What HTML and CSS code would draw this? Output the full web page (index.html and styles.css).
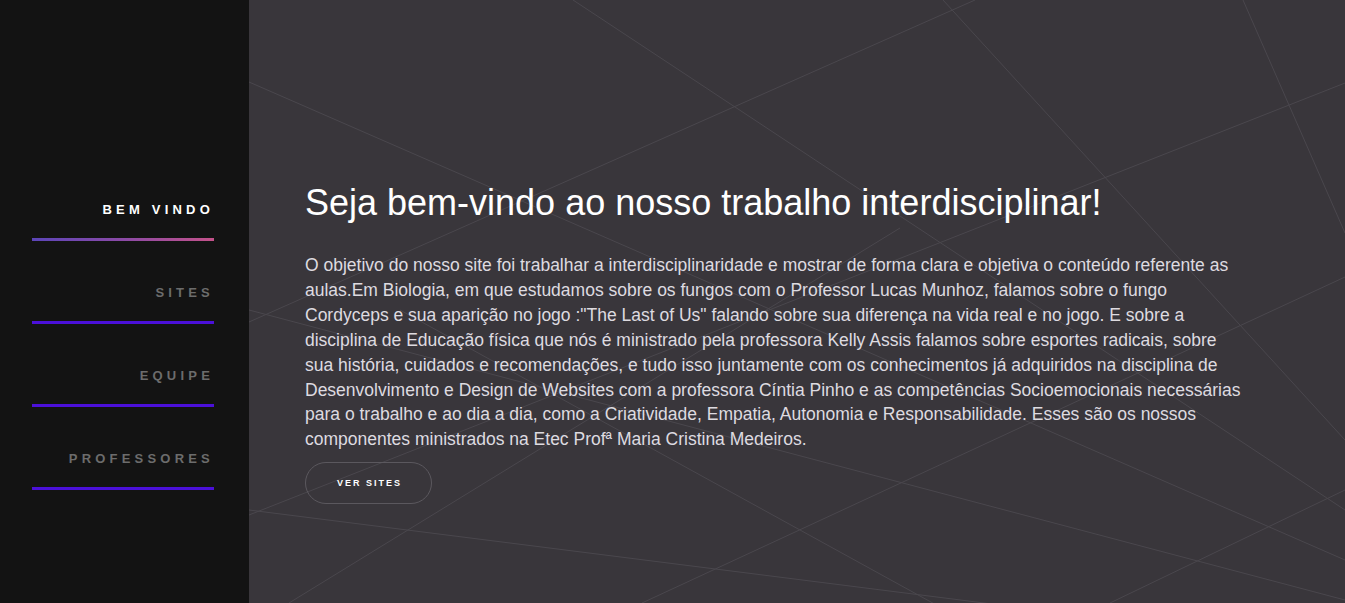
FILE: index.html
```html
<!DOCTYPE html>
<html lang="pt-br">
<head>
<meta charset="utf-8">
<title>Trabalho Interdisciplinar</title>
<link rel="stylesheet" href="styles.css">
</head>
<body>
  <aside class="sidebar">
    <nav class="nav">
      <a class="nav-item active" href="#"><span class="nav-label">BEM VINDO</span><span class="nav-bar"></span></a>
      <a class="nav-item" href="#"><span class="nav-label">SITES</span><span class="nav-bar"></span></a>
      <a class="nav-item" href="#"><span class="nav-label">EQUIPE</span><span class="nav-bar"></span></a>
      <a class="nav-item" href="#"><span class="nav-label">PROFESSORES</span><span class="nav-bar"></span></a>
    </nav>
  </aside>
  <main class="main">
    <svg class="bg-lines" viewBox="0 0 1096 603" preserveAspectRatio="none" aria-hidden="true">
      <g stroke="#4a474d" stroke-width="1" fill="none">
        <line x1="0" y1="82" x2="1096" y2="560"/>
        <line x1="324" y1="0" x2="1096" y2="510"/>
        <line x1="0" y1="322" x2="726" y2="0"/>
        <line x1="694" y1="0" x2="1096" y2="440"/>
        <line x1="994" y1="0" x2="1096" y2="233"/>
        <line x1="0" y1="515" x2="1096" y2="83"/>
        <line x1="0" y1="510" x2="751" y2="605"/>
        <line x1="40" y1="603" x2="651" y2="228"/>
        <line x1="151" y1="310" x2="751" y2="640"/>
        <line x1="393" y1="603" x2="1096" y2="277"/>
        <line x1="861" y1="603" x2="1096" y2="490"/>
        <line x1="0" y1="310" x2="1096" y2="600"/>
      </g>
    </svg>
    <section class="content">
      <h1 class="title">Seja bem-vindo ao nosso trabalho interdisciplinar!</h1>
      <p class="text">O objetivo do nosso site foi trabalhar a interdisciplinaridade e mostrar de forma clara e objetiva o conteúdo referente as aulas.Em Biologia, em que estudamos sobre os fungos com o Professor Lucas Munhoz, falamos sobre o fungo<br>Cordyceps e sua aparição no jogo :"The Last of Us" falando sobre sua diferença na vida real e no jogo. E sobre a disciplina de Educação física que nós é ministrado pela professora Kelly Assis falamos sobre esportes radicais, sobre sua história, cuidados e recomendações, e tudo isso juntamente com os conhecimentos já adquiridos na disciplina de Desenvolvimento e Design de Websites com a professora Cíntia Pinho e as competências Socioemocionais necessárias para o trabalho e ao dia a dia, como a Criatividade, Empatia, Autonomia e Responsabilidade. Esses são os nossos componentes ministrados na Etec Profª Maria Cristina Medeiros.</p>
      <a class="btn" href="#">VER SITES</a>
    </section>
  </main>
</body>
</html>
```

FILE: styles.css
```css
* { box-sizing: border-box; }

html, body {
  margin: 0;
  height: 100%;
}

body {
  display: flex;
  height: 603px;
  overflow: hidden;
  font-family: "Liberation Sans", Arial, sans-serif;
  background: #39363b;
}

.sidebar {
  width: 249px;
  flex: 0 0 249px;
  background: #131313;
}

.nav {
  display: flex;
  flex-direction: column;
  gap: 44px;
  padding: 202px 0 0 32px;
  width: 214px;
}

.nav-item {
  display: flex;
  flex-direction: column;
  align-items: flex-end;
  gap: 20px;
  text-decoration: none;
}

.nav-label {
  font-size: 13px;
  line-height: 16px;
  font-weight: 700;
  letter-spacing: 4.2px;
  color: #6c6c6c;
}

.nav-bar {
  display: block;
  width: 182px;
  height: 3px;
  background: #4b10d9;
}

.nav-item.active .nav-label {
  color: #ffffff;
}

.nav-item.active .nav-bar {
  background: linear-gradient(90deg, #5c45b8 0%, #8b4aa6 50%, #c4528a 100%);
}

.main {
  flex: 1;
  position: relative;
  overflow: hidden;
  background: #39363b;
}

.bg-lines {
  position: absolute;
  inset: 0;
  width: 100%;
  height: 100%;
}

.content {
  position: relative;
  padding: 182px 0 0 56px;
}

.title {
  margin: 0;
  font-size: 36px;
  line-height: 42px;
  font-weight: 400;
  color: #ffffff;
}

.text {
  margin: 29px 0 0;
  width: 940px;
  font-size: 17.5px;
  line-height: 24.9px;
  color: #dedbe0;
}

.btn {
  display: inline-flex;
  align-items: center;
  justify-content: center;
  margin-top: 10px;
  width: 127px;
  height: 42px;
  border: 1px solid #5b585e;
  border-radius: 21px;
  font-size: 9px;
  font-weight: 700;
  letter-spacing: 2px;
  color: #ffffff;
  text-decoration: none;
  padding-left: 2px;
}
```
